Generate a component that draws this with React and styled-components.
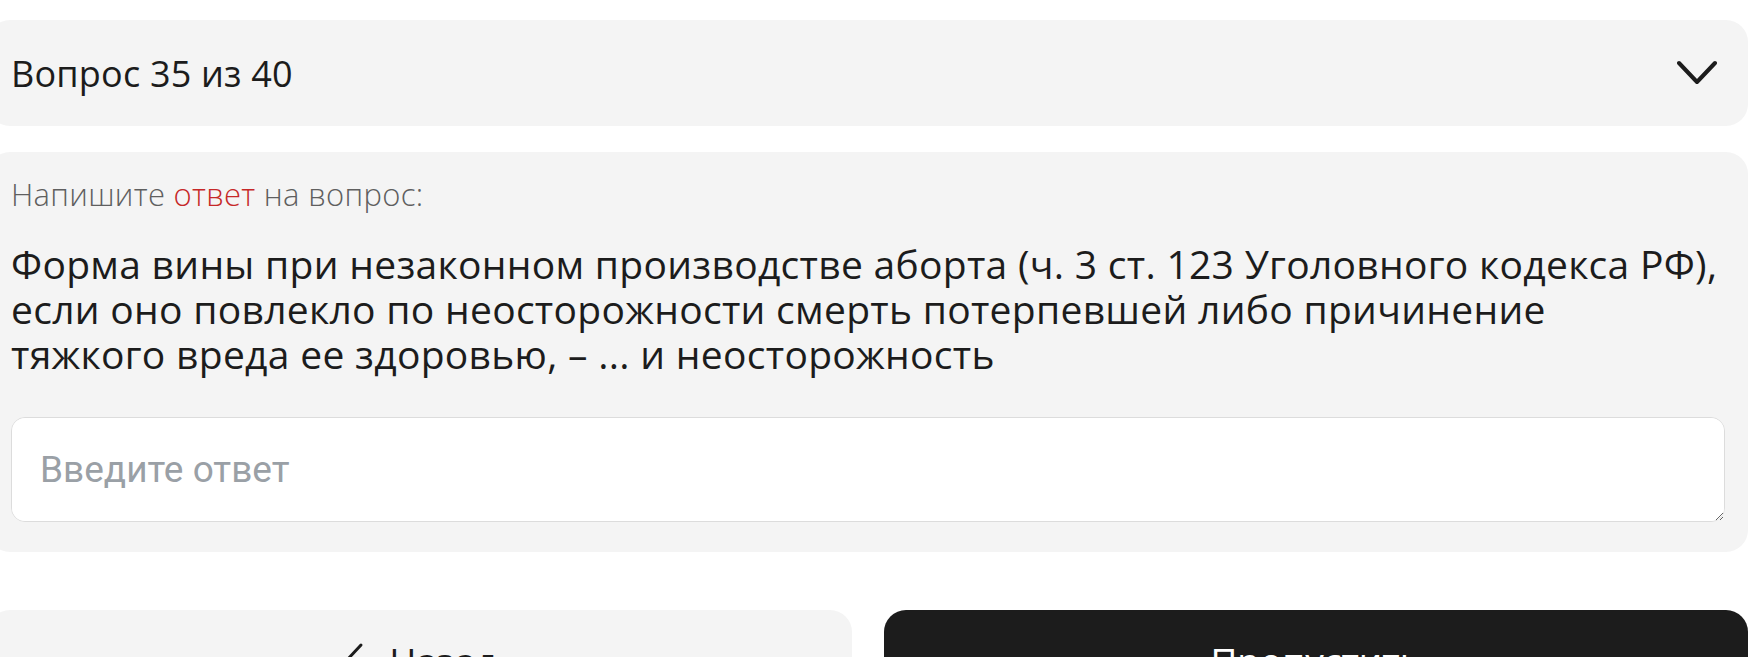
import React from 'react';
import styled, { createGlobalStyle } from 'styled-components';

const GlobalStyle = createGlobalStyle`
    html, body {
        margin: 0;
        padding: 0;
        background: #ffffff;
        overflow: hidden;
    }

    body {
        font-family: 'Open Sans', 'Noto Sans', sans-serif;
        color: #1c1c1c;
    }
`;

const QUESTION_LINES = [
    'Форма вины при незаконном производстве аборта (ч. 3 ст. 123 Уголовного кодекса РФ),',
    'если оно повлекло по неосторожности смерть потерпевшей либо причинение',
    'тяжкого вреда ее здоровью, – ... и неосторожность',
];

function ChevronDown() {
    return (
        <svg width="40" height="26" viewBox="0 0 40 26" fill="none">
            <polyline
                points="2,3 20,22 38,3"
                stroke="#1c1c1c"
                strokeWidth="4"
                strokeLinecap="round"
                strokeLinejoin="round"
            />
        </svg>
    );
}

function ChevronLeft() {
    return (
        <svg width="22" height="36" viewBox="0 0 22 36" fill="none">
            <polyline
                points="18,3 4,18 18,33"
                stroke="#1c1c1c"
                strokeWidth="3"
                strokeLinecap="round"
                strokeLinejoin="round"
            />
        </svg>
    );
}

function App() {
    return (
        <>
            <GlobalStyle />
            <Page>
                <Header>
                    <Counter>Вопрос 35 из 40</Counter>
                    <Toggle type="button" aria-label="Развернуть">
                        <ChevronDown />
                    </Toggle>
                </Header>
                <QuestionCard>
                    <Hint>
                        Напишите <Accent>ответ</Accent> на вопрос:
                    </Hint>
                    <QuestionText>
                        {QUESTION_LINES.map((line) => (
                            <Line key={line}>{line}</Line>
                        ))}
                    </QuestionText>
                    <AnswerInput placeholder="Введите ответ" />
                </QuestionCard>
                <Actions>
                    <NavButton type="button">
                        <ChevronLeft />
                        Назад
                    </NavButton>
                    <NavButton type="button" $primary>
                        Пропустить
                    </NavButton>
                </Actions>
            </Page>
        </>
    );
}

const Page = styled.main`
    margin-left: -12px;
    padding-top: 20px;

    display: flex;
    flex-direction: column;
`;

const Header = styled.div`
    height: 106px;
    padding: 0 23px;
    box-sizing: border-box;

    background-color: #f4f4f4;
    border-radius: 22px;

    display: flex;
    align-items: center;
    justify-content: space-between;
`;

const Counter = styled.span`
    font-size: 36px;
    font-weight: 400;
    letter-spacing: 0.2px;
    color: #1c1c1c;
`;

const Toggle = styled.button`
    padding: 0;
    margin-right: 8px;
    border: none;
    background: transparent;

    display: flex;
`;

const QuestionCard = styled.section`
    margin-top: 26px;
    height: 400px;
    padding: 22px 23px 0;
    box-sizing: border-box;

    background-color: #f4f4f4;
    border-radius: 22px;

    display: flex;
    flex-direction: column;
`;

const Hint = styled.p`
    margin: 0;

    font-size: 31px;
    font-weight: 300;
    line-height: 40px;
    letter-spacing: 0.3px;
    color: #5f5f5f;
`;

const Accent = styled.span`
    color: #c62828;
`;

const QuestionText = styled.p`
    margin: 27px 0 0;

    font-size: 39px;
    font-weight: 400;
    line-height: 45px;
    letter-spacing: 0.3px;
    color: #1c1c1c;
`;

const Line = styled.span`
    display: block;
    white-space: nowrap;
`;

const AnswerInput = styled.textarea`
    margin-top: 41px;
    height: 105px;
    padding: 30px 28px;
    box-sizing: border-box;

    font-family: 'Roboto', 'Liberation Sans', sans-serif;
    font-size: 37px;
    line-height: 44px;
    color: #1c1c1c;

    background: #ffffff;
    border: 1px solid #dcdcdc;
    border-radius: 14px;
    outline: none;
    resize: vertical;

    &::placeholder {
        color: #9aa0a6;
    }
`;

const Actions = styled.div`
    margin-top: 58px;

    display: grid;
    grid-template-columns: 1fr 1fr;
    gap: 32px;
`;

const NavButton = styled.button`
    height: 100px;

    border: none;
    border-radius: 22px;
    background-color: ${({ $primary }) => ($primary ? '#1c1c1c' : '#f4f4f4')};
    color: ${({ $primary }) => ($primary ? '#ffffff' : '#1c1c1c')};

    font-family: 'Open Sans', sans-serif;
    font-size: 37px;
    font-weight: 500;

    display: flex;
    align-items: center;
    justify-content: center;
    gap: 24px;
`;

export default App;
